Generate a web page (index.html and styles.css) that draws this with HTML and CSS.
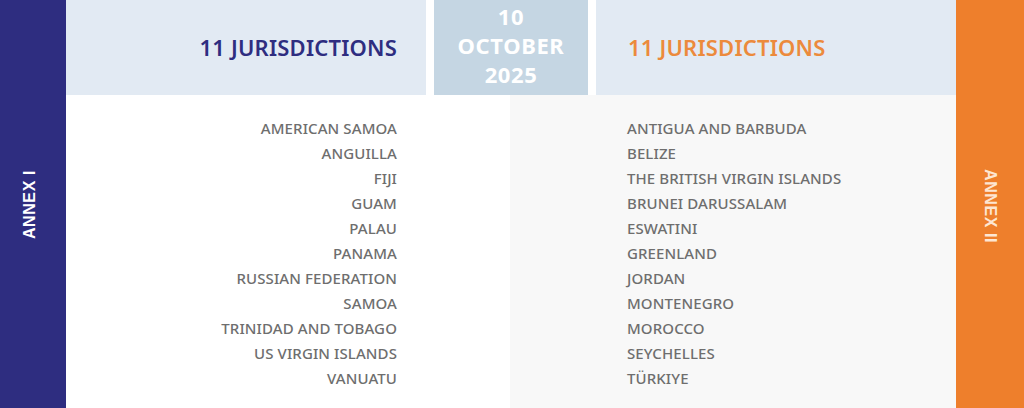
FILE: index.html
```html
<!DOCTYPE html>
<html lang="en">
<head>
<meta charset="utf-8">
<link rel="stylesheet" href="styles.css">
</head>
<body>
<div class="page">
  <aside class="bar bar-left"><span class="annex annex-left">ANNEX I</span></aside>
  <main class="main">
    <header class="head">
      <div class="head-cell head-left"><h2 class="title title-blue">11 JURISDICTIONS</h2></div>
      <div class="head-date">10<br>OCTOBER<br>2025</div>
      <div class="head-cell head-right"><h2 class="title title-orange">11 JURISDICTIONS</h2></div>
    </header>
    <section class="body">
      <ul class="list list-left">
        <li>AMERICAN SAMOA</li>
        <li>ANGUILLA</li>
        <li>FIJI</li>
        <li>GUAM</li>
        <li>PALAU</li>
        <li>PANAMA</li>
        <li>RUSSIAN FEDERATION</li>
        <li>SAMOA</li>
        <li>TRINIDAD AND TOBAGO</li>
        <li>US VIRGIN ISLANDS</li>
        <li>VANUATU</li>
      </ul>
      <ul class="list list-right">
        <li>ANTIGUA AND BARBUDA</li>
        <li>BELIZE</li>
        <li>THE BRITISH VIRGIN ISLANDS</li>
        <li>BRUNEI DARUSSALAM</li>
        <li>ESWATINI</li>
        <li>GREENLAND</li>
        <li>JORDAN</li>
        <li>MONTENEGRO</li>
        <li>MOROCCO</li>
        <li>SEYCHELLES</li>
        <li>TÜRKIYE</li>
      </ul>
    </section>
  </main>
  <aside class="bar bar-right"><span class="annex annex-right">ANNEX II</span></aside>
</div>
</body>
</html>
```
FILE: styles.css
```css
* { box-sizing: border-box; }
html, body { margin: 0; padding: 0; }
body {
  width: 1024px;
  height: 408px;
  overflow: hidden;
  background: #ffffff;
  font-family: "Noto Sans", "DejaVu Sans", sans-serif;
}
.page {
  display: flex;
  height: 408px;
}
.bar {
  display: flex;
  align-items: center;
  justify-content: center;
  flex: none;
}
.bar-left { width: 66px; background: #2e2d80; }
.bar-right { width: 68px; background: #ee7f2c; }
.annex {
  font-family: "Liberation Sans", Arial, sans-serif;
  font-size: 16px;
  font-weight: 700;
  color: #ffffff;
  white-space: nowrap;
  letter-spacing: 0.6px;
}
.annex-left { writing-mode: vertical-rl; transform: rotate(180deg); margin-right: 6px; margin-top: 2px; }
.annex-right { writing-mode: vertical-rl; margin-top: 4px; color: #fde6d2; }
.main {
  flex: 1;
  display: flex;
  flex-direction: column;
}
.head {
  display: grid;
  grid-template-columns: 360px 154px 360px;
  column-gap: 8px;
  height: 95px;
}
.head-cell {
  background: #e2eaf3;
  display: flex;
  align-items: center;
  padding-bottom: 2px;
}
.head-left { justify-content: flex-end; padding-right: 29px; }
.head-right { justify-content: flex-start; padding-left: 32px; }
.title {
  margin: 0;
  font-size: 22px;
  font-weight: 600;
  letter-spacing: 0.2px;
}
.title-blue { color: #2e2d80; }
.title-orange { color: #ec8a3c; }
.head-date {
  background: #c5d6e3;
  color: #ffffff;
  font-size: 22px;
  font-weight: 700;
  line-height: 29px;
  text-align: center;
  padding-top: 2px;
  letter-spacing: 0.6px;
}
.body {
  flex: 1;
  display: grid;
  grid-template-columns: 444px 446px;
}
.list {
  list-style: none;
  margin: 0;
  padding: 21px 0 0;
  font-size: 15px;
  font-weight: 500;
  line-height: 25px;
  color: #6e6e6e;
  letter-spacing: 0.1px;
}
.list-left { text-align: right; padding-right: 113px; background: #ffffff; }
.list-right { text-align: left; padding-left: 117px; background: #f8f8f8; }
```
